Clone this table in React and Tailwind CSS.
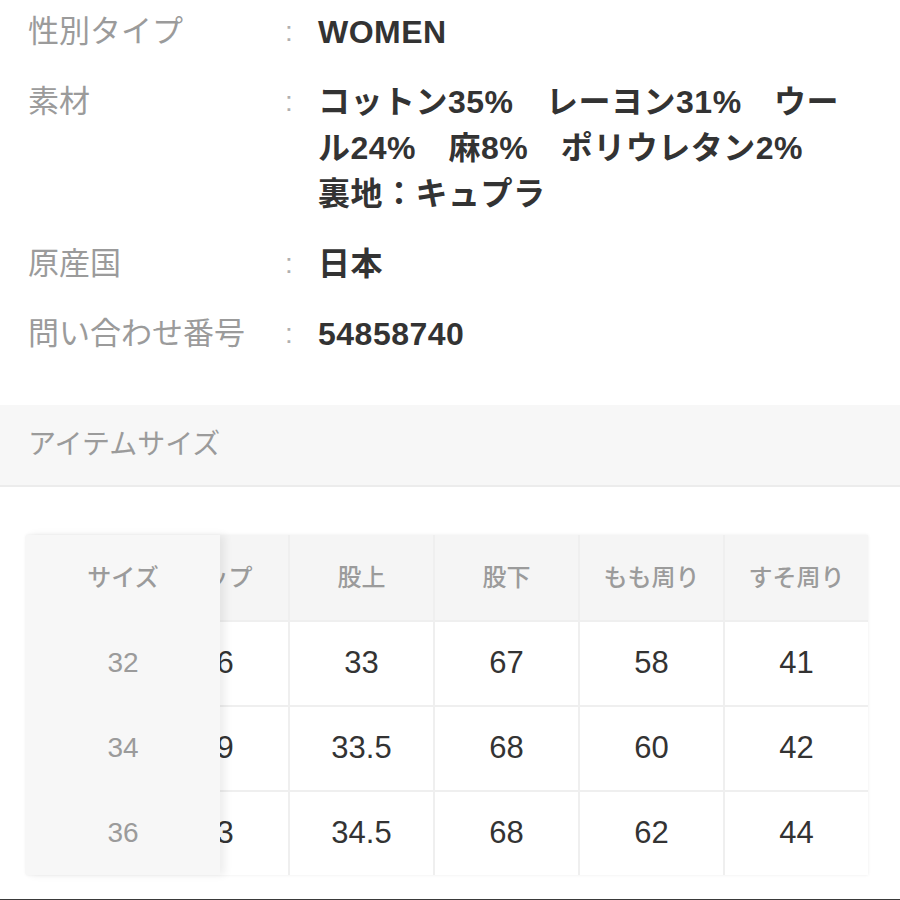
const specs = [
  { label: '性別タイプ', lines: ['WOMEN'] },
  {
    label: '素材',
    lines: ['コットン35%　レーヨン31%　ウー', 'ル24%　麻8%　ポリウレタン2%', '裏地：キュプラ'],
  },
  { label: '原産国', lines: ['日本'] },
  { label: '問い合わせ番号', lines: ['54858740'] },
];

const columns = ['ヒップ', '股上', '股下', 'もも周り', 'すそ周り'];

const rows = [
  { size: '32', values: ['86', '33', '67', '58', '41'] },
  { size: '34', values: ['89', '33.5', '68', '60', '42'] },
  { size: '36', values: ['93', '34.5', '68', '62', '44'] },
];

function SpecRow({ label, lines }) {
  return (
    <div className="flex leading-[46px]">
      <div className="w-[285px] shrink-0 pl-[28px] text-[31px] text-[#9b9b9b]">{label}</div>
      <div className="w-[33px] shrink-0 text-[28px] text-[#b0b0b0]">:</div>
      <div className="flex-1 text-[32px] tracking-[0.5px] font-semibold text-[#333333]">
        {lines.map((l, i) => (
          <div key={i} className="whitespace-pre">{l}</div>
        ))}
      </div>
    </div>
  );
}

export default function App() {
  return (
    <div className="w-[900px] h-[900px] overflow-hidden bg-white font-['Liberation_Sans','Noto_Sans_CJK_JP',sans-serif]">
      {/* spec list */}
      <div className="pt-[9px] flex flex-col gap-[24px]">
        {specs.map(s => (
          <SpecRow key={s.label} {...s} />
        ))}
      </div>

      {/* section header */}
      <div className="mt-[48px] h-[82px] bg-[#f7f7f7] border-b-2 border-[#ececec] flex items-center pl-[28px] text-[28px] text-[#9b9b9b]">
        アイテムサイズ
      </div>

      {/* size table */}
      <div className="mt-[48px] ml-[26px] w-[842px] flex shadow-[0_0_3px_rgba(0,0,0,0.08)]">
        <div className="w-[194px] shrink-0 bg-[#f7f7f7] relative z-10 shadow-[5px_0_8px_rgba(0,0,0,0.07)] flex flex-col text-[#9b9b9b]">
          <div className="h-[85px] flex items-center justify-center text-[24px] font-medium">サイズ</div>
          {rows.map(r => (
            <div key={r.size} className="h-[85px] flex items-center justify-center text-[28px]">{r.size}</div>
          ))}
        </div>
        <div className="flex-1 overflow-hidden bg-[#efefef]">
          <div className="ml-[-75px] flex flex-col gap-[2px]">
            <div className="flex gap-[2px]">
              {columns.map(c => (
                <div key={c} className="w-[143px] h-[85px] shrink-0 bg-[#f5f5f5] flex items-center justify-center text-[24px] font-medium text-[#9b9b9b]">
                  {c}
                </div>
              ))}
            </div>
            {rows.map(r => (
              <div key={r.size} className="flex gap-[2px]">
                {r.values.map((v, i) => (
                  <div key={i} className="w-[143px] h-[83px] shrink-0 bg-white flex items-center justify-center text-[31px] text-[#333333]">
                    {v}
                  </div>
                ))}
              </div>
            ))}
          </div>
        </div>
      </div>

      <div className="mt-[24px] h-[3px] bg-[#3a3a3a]" />
    </div>
  );
}
